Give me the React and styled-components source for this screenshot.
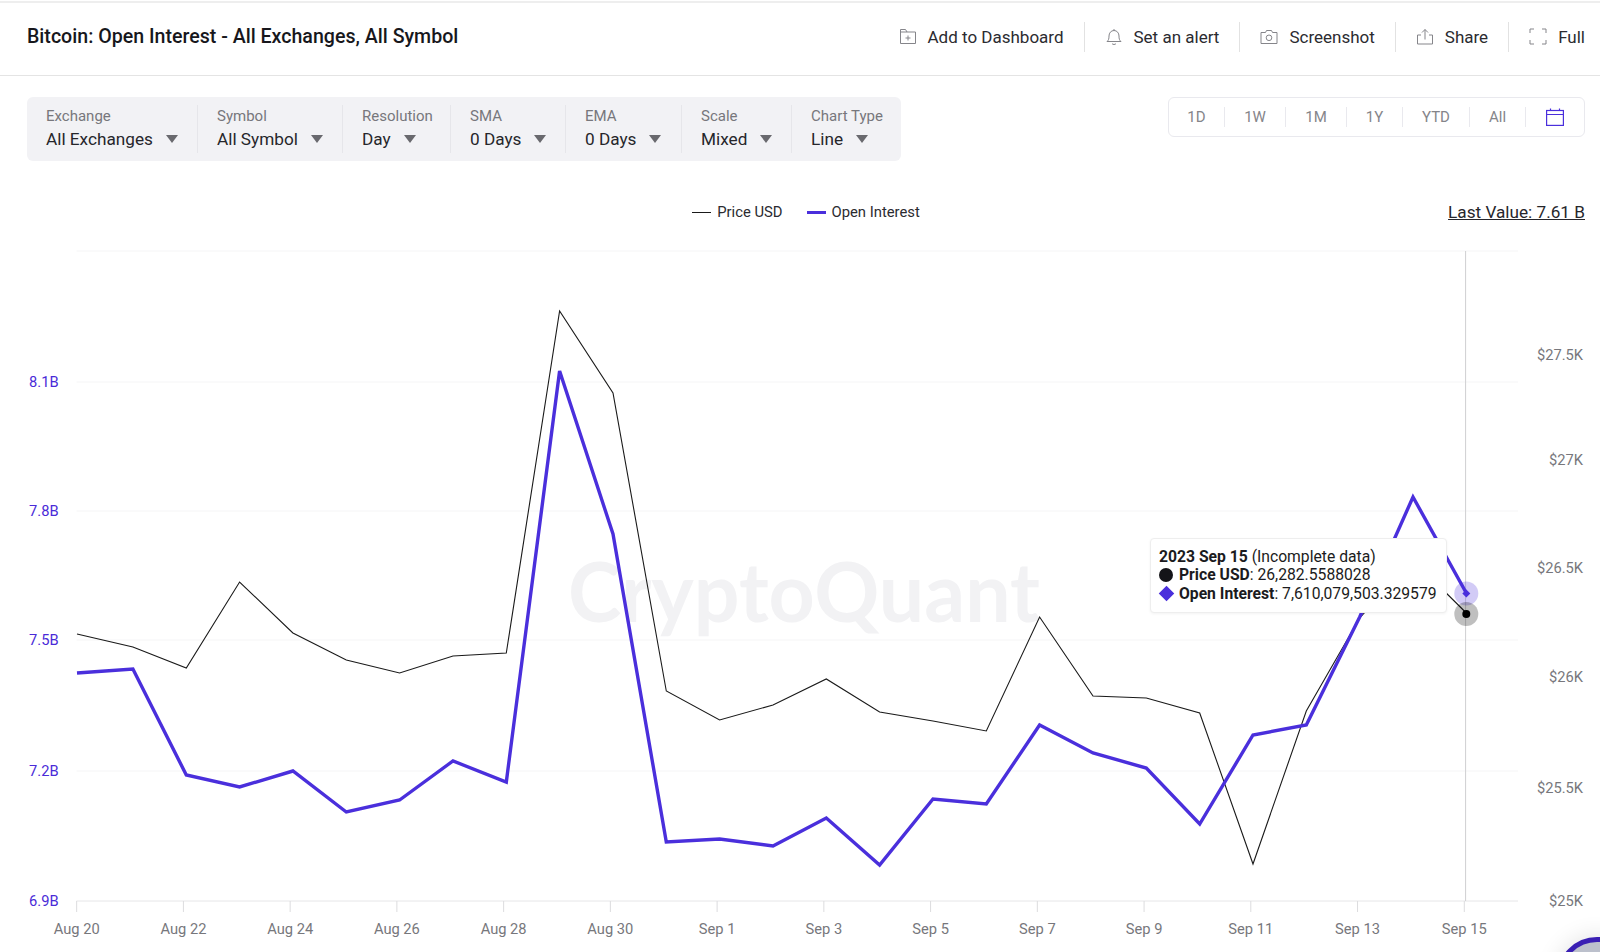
import React from 'react';
import styled, { createGlobalStyle } from 'styled-components';

const GlobalStyle = createGlobalStyle`
  html, body {
    margin: 0;
    padding: 0;
    background: #fff;
    font-family: Roboto, "Liberation Sans", sans-serif;
  }
`;

const Page = styled.div`
  position: relative;
  width: 1600px;
  height: 952px;
  overflow: hidden;
  display: flex;
  flex-direction: column;
  background: #fff;
  color: #1f1f24;
`;

const Header = styled.header`
  height: 75px;
  box-sizing: border-box;
  flex-shrink: 0;
  display: flex;
  align-items: center;
  justify-content: space-between;
  padding: 0 15px 5px 27px;
  border-top: 2px solid #eeeeee;
  border-bottom: 1px solid #e4e4e4;
  margin-top: 1px;
`;

const Title = styled.h1`
  margin: 0;
  font-size: 19.6px;
  font-weight: 500;
  color: #17171c;
`;

const Actions = styled.div`
  display: flex;
  align-items: center;
`;

const Action = styled.button`
  display: flex;
  align-items: center;
  gap: 11px;
  height: 30px;
  padding: 0 20px;
  border: 0;
  border-right: 1px solid #e2e2e2;
  background: none;
  font: 400 17px Roboto, sans-serif;
  color: #2b2b30;
  white-space: nowrap;

  &:last-child {
    border-right: 0;
    padding-right: 0;
  }

  svg {
    flex-shrink: 0;
    fill: none;
    stroke: #85858a;
    stroke-width: 1;
  }
`;

const ControlRow = styled.div`
  display: flex;
  align-items: flex-start;
  justify-content: space-between;
  padding: 21px 15px 0 27px;
`;

const FilterBar = styled.div`
  display: flex;
  align-items: center;
  height: 64px;
  border-radius: 6px;
  background: #f2f2f5;
`;

const FilterGroup = styled.div`
  width: ${p => p.$width}px;
  height: 48px;
  box-sizing: border-box;
  padding: 0 0 2px 19px;
  border-right: 1px solid ${p => (p.$last ? 'transparent' : '#e6e6ea')};
  display: flex;
  flex-direction: column;
  justify-content: center;
  gap: 4px;
`;

const FilterLabel = styled.div`
  font-size: 15px;
  line-height: 18px;
  color: #77777c;
`;

const FilterValue = styled.div`
  display: flex;
  align-items: center;
  gap: 13px;
  font-size: 17.2px;
  line-height: 21px;
  color: #26262b;
  white-space: nowrap;
`;

const Caret = styled.span`
  width: 0;
  height: 0;
  border-left: 6px solid transparent;
  border-right: 6px solid transparent;
  border-top: 8px solid #69696e;
`;

const RangeBox = styled.div`
  display: flex;
  align-items: center;
  height: 38px;
  border: 1px solid #e9e9ee;
  border-radius: 6px;
`;

const RangeItem = styled.div`
  width: ${p => p.$width}px;
  height: 20px;
  box-sizing: border-box;
  display: flex;
  align-items: center;
  justify-content: center;
  border-right: 1px solid ${p => (p.$last ? 'transparent' : '#e9e9ee')};
  font-size: 15px;
  color: #85858a;

  svg {
    fill: none;
    stroke: #4a2fdc;
    stroke-width: 1.2;
  }
`;

const LegendRow = styled.div`
  display: grid;
  grid-template-columns: 1fr auto 1fr;
  align-items: center;
  height: 22px;
  margin: 40px 0 7px;
  padding: 0 15px 0 27px;
`;

const Legend = styled.div`
  grid-column: 2;
  display: flex;
  align-items: center;
  gap: 24px;
`;

const LegendItem = styled.div`
  display: flex;
  align-items: center;
  gap: 6px;
  font-size: 14.8px;
  color: #2b2b30;
`;

const LegendLine = styled.span`
  display: block;
  width: 19px;
  height: ${p => p.$thick}px;
  background: ${p => p.$color};
`;

const LastValue = styled.div`
  grid-column: 3;
  justify-self: end;
  font-size: 17.2px;
  color: #26262b;
  text-decoration: underline;
`;

const ChartArea = styled.div`
  position: relative;
  flex: 1;
  min-height: 0;
`;

const ChartSvg = styled.svg`
  display: block;
  width: 100%;
  height: 100%;
`;

const Watermark = styled.text`
  font-family: Lato, sans-serif;
  font-size: 82px;
  font-weight: 700;
  fill: #f2f2f4;
`;

const AxisLabel = styled.text`
  font-family: Roboto, sans-serif;
  font-size: 14.7px;
  fill: ${p => p.$color};
`;

const Tooltip = styled.div`
  position: absolute;
  left: 1150px;
  top: 308px;
  width: 297px;
  height: 75px;
  box-sizing: border-box;
  padding: 9px 0 0 8px;
  background: #fff;
  border: 1px solid #eeeeee;
  border-radius: 4px;
  box-shadow: 0 1px 3px rgba(0, 0, 0, 0.05);
  font-size: 15.7px;
  line-height: 18.3px;
  color: #1b1b20;
  white-space: nowrap;

  b {
    font-weight: 700;
  }
`;

const TipRow = styled.div`
  display: flex;
  align-items: center;
  gap: 6px;
`;

const TipDot = styled.span`
  width: 14px;
  height: 14px;
  border-radius: 50%;
  background: #141418;
`;

const TipDiamond = styled.span`
  width: 11px;
  height: 11px;
  margin: 0 1.5px;
  transform: rotate(45deg);
  background: #4a2fdc;
`;

const ChatBubble = styled.div`
  position: absolute;
  left: 1557px;
  top: 937px;
  width: 80px;
  height: 80px;
  box-sizing: border-box;
  border: 5px solid #3a1fb4;
  border-radius: 50%;
  background: #bcc0cc;
  box-shadow: 0 0 24px rgba(0, 0, 0, 0.12);
`;

const PURPLE = '#4a2fdc';

const pointX = i => (i === 0 ? 77 : 79.6 + 53.336 * i);

const priceY = [634, 647, 668, 582, 633, 660, 673, 656, 653, 311, 393, 691, 720, 705, 679, 712, 721, 731, 617, 696, 698, 713, 864, 711, 618, 560, 613];
const interestY = [673, 669, 775, 787, 771, 812, 800, 761, 782, 371, 534, 842, 839, 846, 818, 865, 799, 804, 725, 753, 768, 824, 735, 725, 617, 497, 593];

const toPoints = ys => ys.map((y, i) => `${pointX(i).toFixed(1)},${y}`).join(' ');

const gridLines = [251, 382, 511, 640, 771];
const leftTicks = [['8.1B', 382], ['7.8B', 511], ['7.5B', 640], ['7.2B', 771], ['6.9B', 901]];
const rightTicks = [['$27.5K', 355], ['$27K', 460], ['$26.5K', 568], ['$26K', 677], ['$25.5K', 788], ['$25K', 901]];
const dateTicks = ['Aug 20', 'Aug 22', 'Aug 24', 'Aug 26', 'Aug 28', 'Aug 30', 'Sep 1', 'Sep 3', 'Sep 5', 'Sep 7', 'Sep 9', 'Sep 11', 'Sep 13', 'Sep 15'];

const filters = [
  { label: 'Exchange', value: 'All Exchanges', width: 171 },
  { label: 'Symbol', value: 'All Symbol', width: 145 },
  { label: 'Resolution', value: 'Day', width: 108 },
  { label: 'SMA', value: '0 Days', width: 115 },
  { label: 'EMA', value: '0 Days', width: 116 },
  { label: 'Scale', value: 'Mixed', width: 110 },
  { label: 'Chart Type', value: 'Line', width: 109 },
];

const ranges = [['1D', 56], ['1W', 61], ['1M', 61], ['1Y', 56], ['YTD', 67], ['All', 56]];

const FolderIcon = () => (
  <svg width="18" height="17" viewBox="0 0 18 17">
    <path d="M1.5 15.5V1.5h5l1.5 2.5h8.5v11.500z" />
    <path d="M1.5 4h6.500M9 7.500v5M6.500 10h5" />
  </svg>
);

const BellIcon = () => (
  <svg width="18" height="18" viewBox="0 0 18 18">
    <path d="M2 13.500c1.600-1.400 2-2.600 2-5.500 0-3 2-5.500 5-5.500s5 2.500 5 5.500c0 2.900.4 4.100 2 5.500z" />
    <path d="M9 1v1.500M7 15.500c.5 1.300 3.500 1.300 4 0" />
  </svg>
);

const CameraIcon = () => (
  <svg width="18" height="16" viewBox="0 0 18 16">
    <path d="M1 3.500h4.500L6.500 1.500h5l1 2h4.500v11H1z" />
    <circle cx="9" cy="8.800" r="2.800" />
  </svg>
);

const ShareIcon = () => (
  <svg width="18" height="17" viewBox="0 0 18 17">
    <path d="M5 7H1.500v9h15V7H13" />
    <path d="M9 11.500V1.500M6 4.500l3-3 3 3" />
  </svg>
);

const FullIcon = () => (
  <svg width="18" height="17" viewBox="0 0 18 17">
    <path d="M1 5V1h4M13 1h4v4M17 12v4h-4M5 16H1v-4" />
  </svg>
);

const CalendarIcon = () => (
  <svg width="18" height="18" viewBox="0 0 18 18">
    <rect x="0.600" y="2.500" width="16.800" height="14.900" />
    <path d="M0.600 6.500h16.800M4.500 0.500v2M13.500 0.500v2" />
  </svg>
);

const actions = [
  { label: 'Add to Dashboard', icon: <FolderIcon /> },
  { label: 'Set an alert', icon: <BellIcon /> },
  { label: 'Screenshot', icon: <CameraIcon /> },
  { label: 'Share', icon: <ShareIcon /> },
  { label: 'Full', icon: <FullIcon /> },
];

const Chart = () => (
  <ChartSvg viewBox="0 230 1600 722" preserveAspectRatio="none">
    <Watermark x="568" y="622" textLength="472" lengthAdjust="spacingAndGlyphs">CryptoQuant</Watermark>

    {gridLines.map(y => (
      <line key={y} x1="76.500" x2="1518" y1={y} y2={y} stroke="#f5f5f6" />
    ))}
    <line x1="76.500" x2="1518" y1="901" y2="901" stroke="#e6e6e8" />

    {dateTicks.map((label, i) => {
      const x = 76.67 + 106.74 * i;
      return (
        <g key={label}>
          <line x1={x} x2={x} y1="901" y2="912" stroke="#dcdcde" />
          <AxisLabel x={x} y="934" textAnchor="middle" $color="#77777c">{label}</AxisLabel>
        </g>
      );
    })}

    {leftTicks.map(([label, y]) => (
      <AxisLabel key={label} x="29" y={y + 5} $color="#4a2bd8">{label}</AxisLabel>
    ))}
    {rightTicks.map(([label, y]) => (
      <AxisLabel key={label} x="1583" y={y + 5} textAnchor="end" $color="#77777c">{label}</AxisLabel>
    ))}

    <line x1="1465.600" x2="1465.600" y1="251" y2="901" stroke="#cfcfd1" />

    <polyline points={toPoints(priceY)} fill="none" stroke="#1a1a1a" strokeWidth="1.100" />
    <polyline points={toPoints(interestY)} fill="none" stroke={PURPLE} strokeWidth="3.400" strokeLinejoin="miter" />

    <circle cx="1466.300" cy="593.500" r="12" fill={PURPLE} fillOpacity="0.25" />
    <path d="M1466.300 589.500l4 4-4 4-4-4z" fill={PURPLE} />
    <circle cx="1466.300" cy="614" r="12" fill="#000" fillOpacity="0.25" />
    <circle cx="1466.300" cy="614" r="4" fill="#000" />
  </ChartSvg>
);

export default function App() {
  return (
    <Page>
      <GlobalStyle />
      <Header>
        <Title>Bitcoin: Open Interest - All Exchanges, All Symbol</Title>
        <Actions>
          {actions.map(a => (
            <Action key={a.label}>
              {a.icon}
              {a.label}
            </Action>
          ))}
        </Actions>
      </Header>

      <ControlRow>
        <FilterBar>
          {filters.map((f, i) => (
            <FilterGroup key={f.label} $width={f.width} $last={i === filters.length - 1}>
              <FilterLabel>{f.label}</FilterLabel>
              <FilterValue>
                {f.value}
                <Caret />
              </FilterValue>
            </FilterGroup>
          ))}
        </FilterBar>
        <RangeBox>
          {ranges.map(([label, width]) => (
            <RangeItem key={label} $width={width}>{label}</RangeItem>
          ))}
          <RangeItem $width={58} $last>
            <CalendarIcon />
          </RangeItem>
        </RangeBox>
      </ControlRow>

      <LegendRow>
        <Legend>
          <LegendItem>
            <LegendLine $color="#1a1a1a" $thick={1} />
            Price USD
          </LegendItem>
          <LegendItem>
            <LegendLine $color={PURPLE} $thick={3} />
            Open Interest
          </LegendItem>
        </Legend>
        <LastValue>Last Value: 7.61 B</LastValue>
      </LegendRow>

      <ChartArea>
        <Chart />
        <Tooltip>
          <div><b>2023 Sep 15</b> (Incomplete data)</div>
          <TipRow>
            <TipDot />
            <span><b>Price USD</b>: 26,282.5588028</span>
          </TipRow>
          <TipRow>
            <TipDiamond />
            <span><b>Open Interest</b>: 7,610,079,503.329579</span>
          </TipRow>
        </Tooltip>
      </ChartArea>

      <ChatBubble />
    </Page>
  );
}
